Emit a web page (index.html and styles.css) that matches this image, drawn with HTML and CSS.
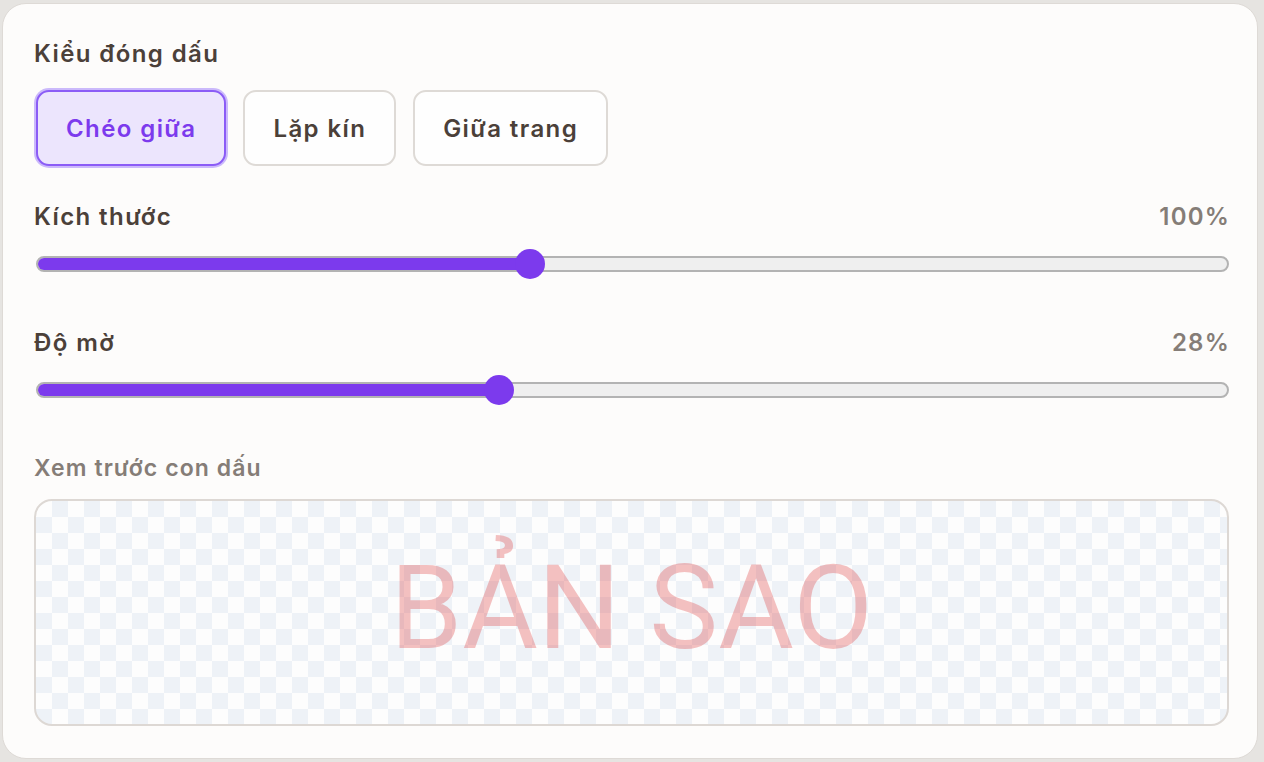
FILE: index.html
```html
<!DOCTYPE html>
<html lang="vi">
<head>
<meta charset="utf-8">
<title>Kiểu đóng dấu</title>
<link rel="stylesheet" href="styles.css">
</head>
<body>
<div class="card">
  <div class="label">Kiểu đóng dấu</div>
  <div class="modes">
    <button class="mode active">Chéo giữa</button>
    <button class="mode">Lặp kín</button>
    <button class="mode">Giữa trang</button>
  </div>

  <div class="row first-row">
    <div class="label">Kích thước</div>
    <div class="value">100%</div>
  </div>
  <div class="slider">
    <div class="track">
      <div class="fill" style="width:41.4%"></div>
    </div>
    <div class="thumb" style="left:41.4%"></div>
  </div>

  <div class="row second-row">
    <div class="label">Độ mờ</div>
    <div class="value">28%</div>
  </div>
  <div class="slider">
    <div class="track">
      <div class="fill" style="width:38.8%"></div>
    </div>
    <div class="thumb" style="left:38.8%"></div>
  </div>

  <div class="preview-label">Xem trước con dấu</div>
  <div class="preview">
    <span class="stamp">BẢN SAO</span>
  </div>
</div>
</body>
</html>
```
FILE: styles.css
```css
* { box-sizing: border-box; }
html, body { height: 100%; }
body {
  margin: 0;
  padding: 3px 6px 3px 2px;
  background: #e6e4e1;
  font-family: Inter, "Noto Sans", sans-serif;
}
.card {
  height: 756px;
  background: #fdfcfb;
  border: 1px solid #dedad6;
  border-radius: 24px;
  padding: 34px 28px 0 31px;
}
.label {
  font-size: 24px;
  line-height: 32px;
  font-weight: 600;
  color: #4b4039;
  letter-spacing: 1.4px;
}
.value {
  font-size: 24px;
  line-height: 32px;
  font-weight: 600;
  color: #857d77;
  letter-spacing: 1.2px;
  margin-right: -1px;
}
.modes {
  display: flex;
  gap: 17px;
  margin-top: 20px;
  padding-left: 2px;
}
.mode {
  height: 76px;
  padding: 0 28px;
  border: 2px solid #dedad6;
  border-radius: 13px;
  background: #fefefe;
  font-family: inherit;
  font-size: 24px;
  font-weight: 600;
  color: #4b4039;
  letter-spacing: 1.4px;
}
.mode.active {
  border-color: #8b5cf6;
  background: #ece5fd;
  color: #7c3aed;
  box-shadow: 0 0 0 2px #cbb9fb;
}
.row {
  display: flex;
  justify-content: space-between;
  align-items: center;
}
.first-row { margin-top: 35px; }
.second-row { margin-top: 48px; }
.slider {
  position: relative;
  height: 30px;
  margin-top: 16px;
  margin-left: 2px;
  display: flex;
  align-items: center;
}
.track {
  position: relative;
  width: 100%;
  height: 16px;
  border-radius: 8px;
  background: #efefef;
  border: 2px solid #b3b3b3;
  overflow: hidden;
}
.fill {
  position: absolute;
  left: -2px;
  top: -2px;
  bottom: -2px;
  background: #7c3aed;
  border-bottom: 2px solid #6f45c8;
  border-radius: 8px 0 0 8px;
}
.thumb {
  position: absolute;
  top: 0;
  width: 30px;
  height: 30px;
  margin-left: -15px;
  border-radius: 50%;
  background: #7c3aed;
}
.preview-label {
  margin-top: 47px;
  font-size: 23px;
  line-height: 32px;
  font-weight: 600;
  color: #857d77;
  letter-spacing: 1.1px;
}
.preview {
  margin-top: 15px;
  height: 227px;
  border: 2px solid #ddd8d4;
  border-radius: 18px;
  background-color: #fdfdfd;
  background-image: conic-gradient(#eef2f7 0 25%, transparent 0 50%, #eef2f7 0 75%, transparent 0);
  background-size: 32px 32px;
  display: flex;
  align-items: center;
  justify-content: center;
  overflow: hidden;
}
.stamp {
  font-family: Roboto, "Liberation Sans", sans-serif;
  font-size: 116px;
  line-height: 1;
  font-weight: 400;
  color: #dc2626;
  opacity: 0.28;
  margin-top: -10px;
  white-space: nowrap;
}
```
